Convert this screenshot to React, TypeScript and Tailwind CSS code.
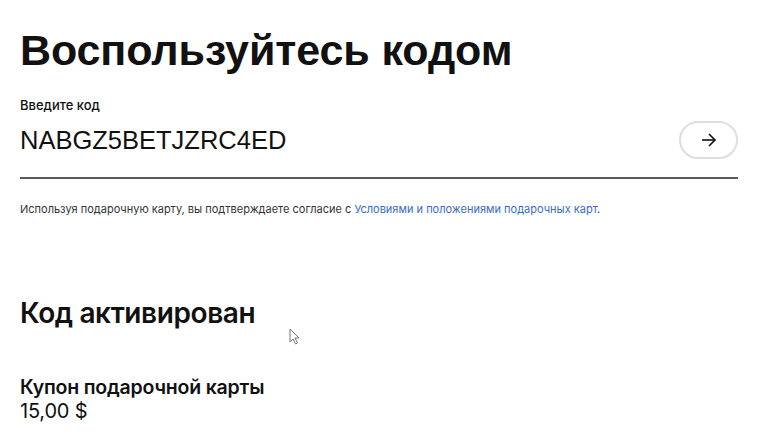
import React from 'react';

const App: React.FC = () => {
	return (
		<div className="relative w-[765px] h-[448px] overflow-hidden bg-white text-[#111] font-['Inter',sans-serif]">
			<div className="px-5 pt-[24px]">
				<h1 className="font-['Liberation_Sans',Arial,sans-serif] font-bold text-[43px] leading-[52px] tracking-[-0.1px]">
					Воспользуйтесь кодом
				</h1>

				<div className="mt-[21px] w-[718px] border-b-2 border-[#5a5a5a] pb-[18px]">
					<label className="block text-[13px] leading-[16px] font-medium">Введите код</label>
					<div className="mt-[8px] h-[38px] flex items-center justify-between">
						<span className="font-['Liberation_Sans',Arial,sans-serif] text-[25.5px] leading-[30px]">
							NABGZ5BETJZRC4ED
						</span>
						<button className="w-[59px] h-[38px] rounded-full border-2 border-[#dedede] flex items-center justify-center">
							<svg width="16" height="14" viewBox="0 0 16 14" fill="none" stroke="#111" strokeWidth="1.6">
								<path d="M1 7h13" />
								<path d="M8 1l6 6-6 6" />
							</svg>
						</button>
					</div>
				</div>

				<p className="mt-[22px] text-[11px] leading-[16px] text-[#333]">
					Используя подарочную карту, вы подтверждаете согласие с{' '}
					<a className="text-[#3a6cc2]">Условиями и положениями подарочных карт</a>.
				</p>

				<h2 className="mt-[79px] text-[28px] leading-[34px] font-semibold tracking-[-0.4px]">Код активирован</h2>

				<div className="mt-[45px]">
					<div className="text-[19.5px] leading-[24px] font-semibold tracking-[-0.2px]">Купон подарочной карты</div>
					<div className="text-[20px] leading-[24px] tracking-[-0.2px]">15,00 $</div>
				</div>
			</div>

			<svg className="absolute left-[289px] top-[328px]" width="12" height="18" viewBox="0 0 12 18">
				<path d="M1 1v13l3-3 2.5 5 2-1-2.5-5H10z" fill="#fff" stroke="#777" strokeWidth="1" />
			</svg>
		</div>
	);
};

export default App;
